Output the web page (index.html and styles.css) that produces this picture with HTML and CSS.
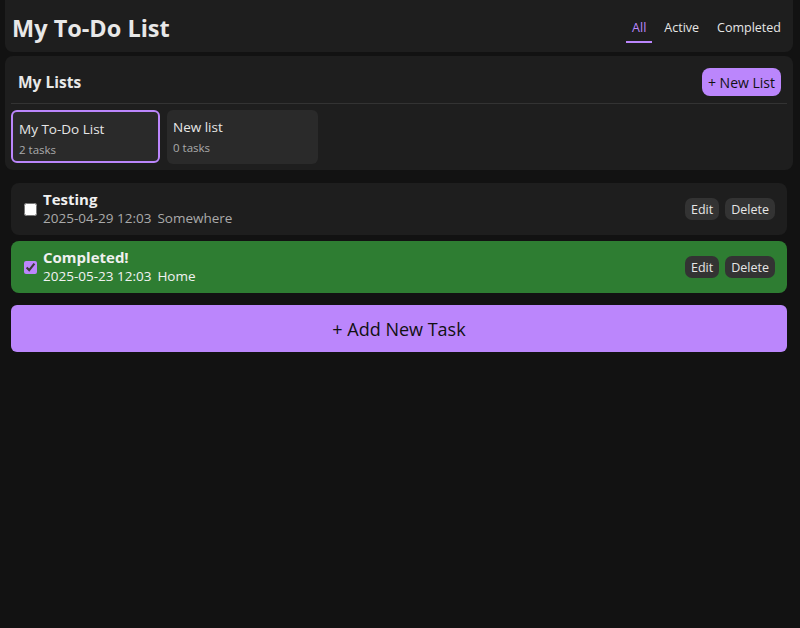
FILE: index.html
```html
<!DOCTYPE html>
<html lang="en">
<head>
<meta charset="utf-8">
<title>My To-Do List</title>
<link rel="stylesheet" href="styles.css">
</head>
<body>
<div class="app">
  <header class="topbar">
    <h1 class="title">My To-Do List</h1>
    <nav class="filters">
      <button class="filter active">All</button>
      <button class="filter">Active</button>
      <button class="filter">Completed</button>
    </nav>
  </header>

  <section class="lists-card">
    <div class="lists-head">
      <h2 class="lists-title">My Lists</h2>
      <button class="new-list">+ New List</button>
    </div>
    <div class="lists-row">
      <div class="list-item selected">
        <div class="list-name">My To-Do List</div>
        <div class="list-count">2 tasks</div>
      </div>
      <div class="list-item">
        <div class="list-name">New list</div>
        <div class="list-count">0 tasks</div>
      </div>
    </div>
  </section>

  <main class="tasks">
    <div class="task">
      <input type="checkbox" class="check">
      <div class="task-body">
        <div class="task-title">Testing</div>
        <div class="task-meta"><span class="date">2025-04-29 12:03</span><span>Somewhere</span></div>
      </div>
      <div class="task-actions">
        <button class="small-btn">Edit</button>
        <button class="small-btn">Delete</button>
      </div>
    </div>
    <div class="task done">
      <input type="checkbox" class="check" checked>
      <div class="task-body">
        <div class="task-title">Completed!</div>
        <div class="task-meta"><span class="date">2025-05-23 12:03</span><span>Home</span></div>
      </div>
      <div class="task-actions">
        <button class="small-btn">Edit</button>
        <button class="small-btn">Delete</button>
      </div>
    </div>
    <button class="add-task">+ Add New Task</button>
  </main>
</div>
</body>
</html>
```
FILE: styles.css
```css
* { box-sizing: border-box; }
html, body {
  margin: 0;
  background: #121212;
  color: #e6e6e6;
  font-family: "Open Sans", "Noto Sans", sans-serif;
}
button { font-family: inherit; cursor: pointer; }

.app { padding: 0 7px 0 5px; }

.topbar {
  height: 52px;
  background: #1e1e1e;
  border-radius: 0 0 8px 8px;
  display: flex;
  align-items: center;
  justify-content: space-between;
  padding: 4px 6px 0 7px;
}
.title {
  margin: 0;
  font-size: 23.5px;
  font-weight: 700;
  color: #e8e8e8;
}
.filters { display: flex; gap: 6px; align-self: flex-end; margin-bottom: 9px; }
.filter {
  background: none;
  border: none;
  border-bottom: 2px solid transparent;
  color: #e6e6e6;
  font-size: 12.5px;
  padding: 4px 6px 5px;
}
.filter.active { color: #bb86fc; border-bottom-color: #bb86fc; }

.lists-card {
  margin-top: 4px;
  background: #1e1e1e;
  border-radius: 8px;
  padding: 12px 6px 6px;
}
.lists-head {
  display: flex;
  align-items: center;
  justify-content: space-between;
  padding: 0 6px 7px 7px;
  border-bottom: 1px solid #333;
}
.lists-title { margin: 0; font-size: 15.5px; font-weight: 700; color: #e8e8e8; }
.new-list {
  height: 28px;
  background: #bb86fc;
  color: #111;
  border: none;
  border-radius: 8px;
  font-size: 14px;
  padding: 0 6px;
}
.lists-row { display: flex; gap: 7px; margin-top: 6px; }
.list-item {
  width: 151px;
  height: 54px;
  background: #2a2a2a;
  border-radius: 6px;
  padding: 8px 6px;
}
.list-item.selected {
  width: 149px;
  height: 53px;
  border: 2px solid #bb86fc;
  padding: 8px 6px;
}
.list-name { font-size: 13.5px; color: #e6e6e6; line-height: 18px; }
.list-count { font-size: 11.5px; color: #aaa; margin-top: 4px; }

.tasks { padding: 13px 6px 0; display: flex; flex-direction: column; gap: 6px; }
.task {
  height: 52px;
  background: #1e1e1e;
  border-radius: 8px;
  display: flex;
  align-items: center;
  padding: 0 12px 0 13px;
}
.task.done { background: #2e7d32; }
.check {
  margin: 0 6px 0 0;
  width: 13px;
  height: 13px;
  accent-color: #bb86fc;
}
.task-body { flex: 1; }
.task-title { font-size: 15px; font-weight: 700; color: #f0f0f0; line-height: 19px; }
.task-meta { font-size: 13.5px; color: #aaa; line-height: 19px; }
.task.done .task-meta { color: #f2f2f2; }
.date { margin-right: 6px; }
.task-actions { display: flex; gap: 6px; }
.small-btn {
  height: 22px;
  background: #333;
  color: #e6e6e6;
  border: none;
  border-radius: 7px;
  font-size: 12.5px;
  padding: 0 6px;
}
.add-task {
  margin-top: 6px;
  height: 47px;
  background: #bb86fc;
  color: #111;
  border: none;
  border-radius: 6px;
  font-size: 18px;
}
```
